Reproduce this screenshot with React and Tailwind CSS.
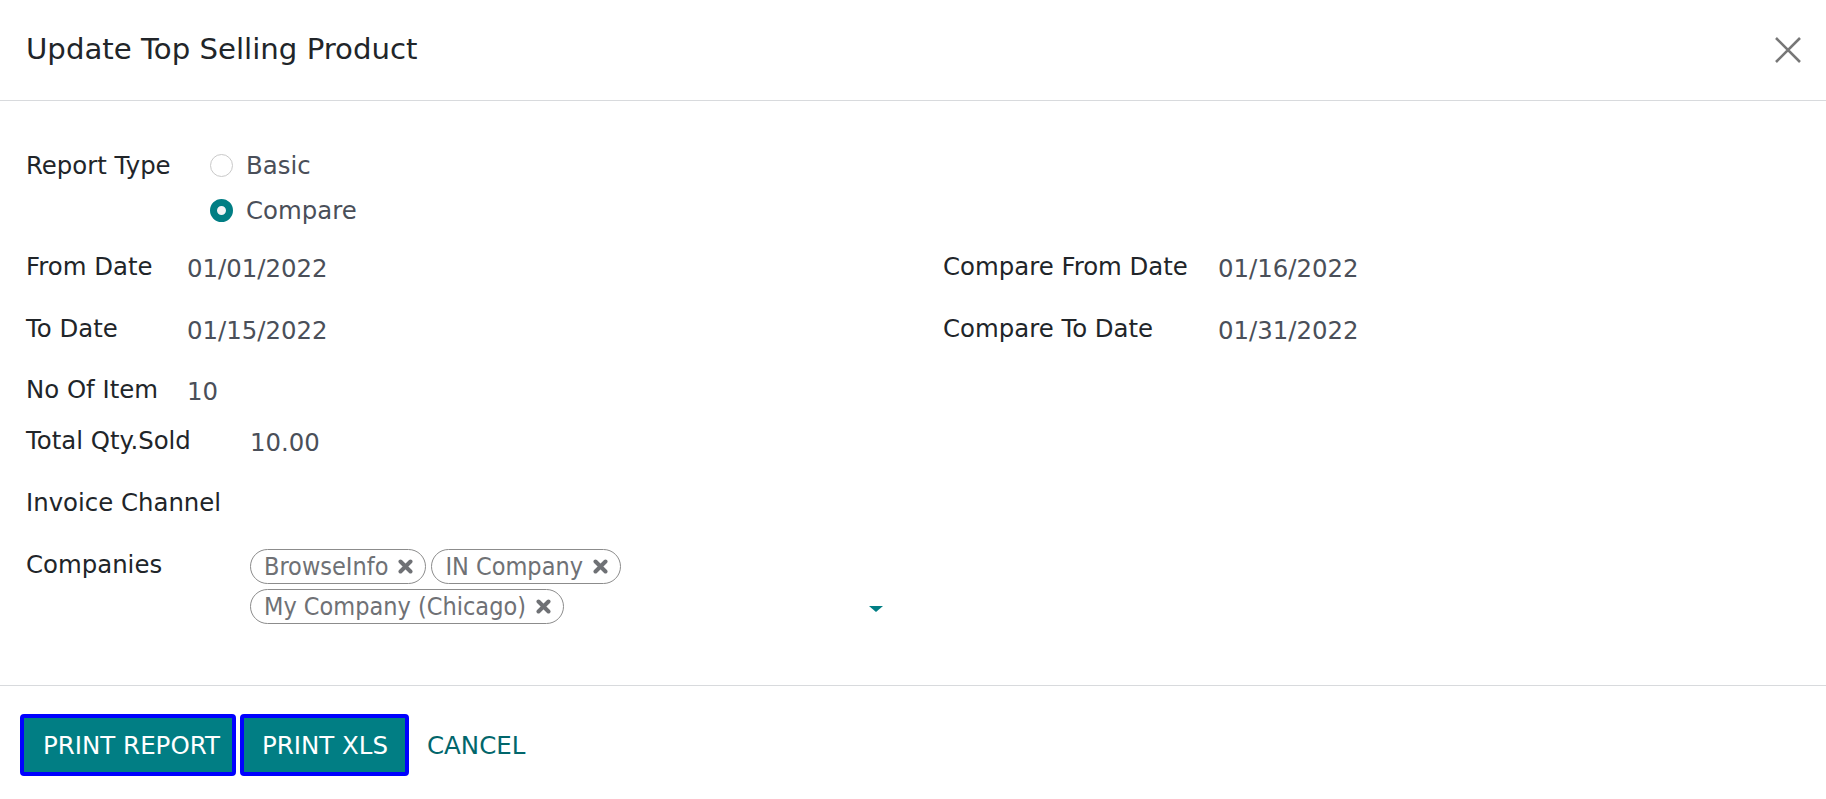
import React from 'react';

function Radio({ checked, label }) {
  return (
    <div className="flex items-center h-[35px]">
      {checked ? (
        <span className="w-[23px] h-[23px] rounded-full border-[7.5px] border-[#017e84] bg-[#f3f4f6] box-border" />
      ) : (
        <span className="w-[23px] h-[23px] rounded-full border border-[#c9c9c9] bg-white box-border" />
      )}
      <span className="ml-[13px] text-[#4a4f59]">{label}</span>
    </div>
  );
}

function Row({ label, value, labelWidth }) {
  return (
    <div className="flex h-[35px]">
      <div className={labelWidth}>{label}</div>
      <div className="pt-[2px] text-[#4a4f59]">{value}</div>
    </div>
  );
}

function Tag({ name }) {
  return (
    <span className="h-[35px] box-border inline-flex items-center rounded-full border border-[#8c8c8c] pl-[13px] pr-[12px] text-[25px] text-[#6f7175] font-['DejaVu_Sans_Condensed','DejaVu_Sans',sans-serif]">
      {name}
      <svg className="ml-[10px]" width="15" height="15" viewBox="0 0 15 15">
        <path d="M2.5 2.5 L12.5 12.5 M12.5 2.5 L2.5 12.5" stroke="#6f7175" strokeWidth="4" strokeLinecap="round" />
      </svg>
    </span>
  );
}

export default function App() {
  return (
    <div className="w-full h-screen bg-white font-['DejaVu_Sans',sans-serif] text-[#212529] text-[24.4px] leading-[35px] flex flex-col">
      <header className="h-[101px] shrink-0 flex items-center justify-between pl-[26px] pr-[25px] border-b border-[#d8dadd]">
        <h4 className="text-[29.2px] leading-none">Update Top Selling Product</h4>
        <button className="w-[26px] h-[26px]">
          <svg width="26" height="26" viewBox="0 0 26 26">
            <path d="M1 1 L25 25 M25 1 L1 25" stroke="#777777" strokeWidth="2.6" />
          </svg>
        </button>
      </header>

      <main className="h-[585px] shrink-0 px-[26px] pt-[46.5px] border-b border-[#d8dadd]">
        <div className="flex">
          <div className="w-[184px]">Report Type</div>
          <div className="flex flex-col gap-[10.5px]">
            <Radio label="Basic" />
            <Radio label="Compare" checked />
          </div>
        </div>

        <div className="grid grid-cols-2 gap-x-[60px] mt-[21px]">
          <div className="flex flex-col gap-[26.5px]">
            <Row label="From Date" value="01/01/2022" labelWidth="w-[161px]" />
            <Row label="To Date" value="01/15/2022" labelWidth="w-[161px]" />
            <Row label="No Of Item" value="10" labelWidth="w-[161px]" />
          </div>
          <div className="flex flex-col gap-[26.5px]">
            <Row label="Compare From Date" value="01/16/2022" labelWidth="w-[275px]" />
            <Row label="Compare To Date" value="01/31/2022" labelWidth="w-[275px]" />
          </div>
        </div>

        <div className="flex flex-col gap-[27px] mt-[16px]">
          <Row label="Total Qty.Sold" value="10.00" labelWidth="w-[224px]" />
          <div className="flex h-[35px]">
            <div className="w-[224px]">Invoice Channel</div>
          </div>
          <div className="flex">
            <div className="w-[224px]">Companies</div>
            <div className="w-[633px] flex items-end mt-[2px]">
              <div className="flex-1 flex flex-wrap gap-x-[5px] gap-y-[5px]">
                <Tag name="BrowseInfo" />
                <Tag name="IN Company" />
                <Tag name="My Company (Chicago)" />
              </div>
              <span className="mb-[12.5px] w-0 h-0 border-l-[7.5px] border-r-[7.5px] border-t-[6px] border-l-transparent border-r-transparent border-t-[#017e84]" />
            </div>
          </div>
        </div>
      </main>

      <footer className="flex items-start gap-[4px] px-[20px] pt-[28px] text-[24.5px]">
        <button className="h-[62px] pl-[19px] pr-[12px] rounded-[4px] border-[4px] border-[#0000ff] bg-[#017e84] text-white">
          PRINT REPORT
        </button>
        <button className="h-[62px] pl-[18px] pr-[17px] rounded-[4px] border-[4px] border-[#0000ff] bg-[#017e84] text-white">
          PRINT XLS
        </button>
        <button className="h-[62px] px-[14px] text-[#01666b]">CANCEL</button>
      </footer>
    </div>
  );
}
